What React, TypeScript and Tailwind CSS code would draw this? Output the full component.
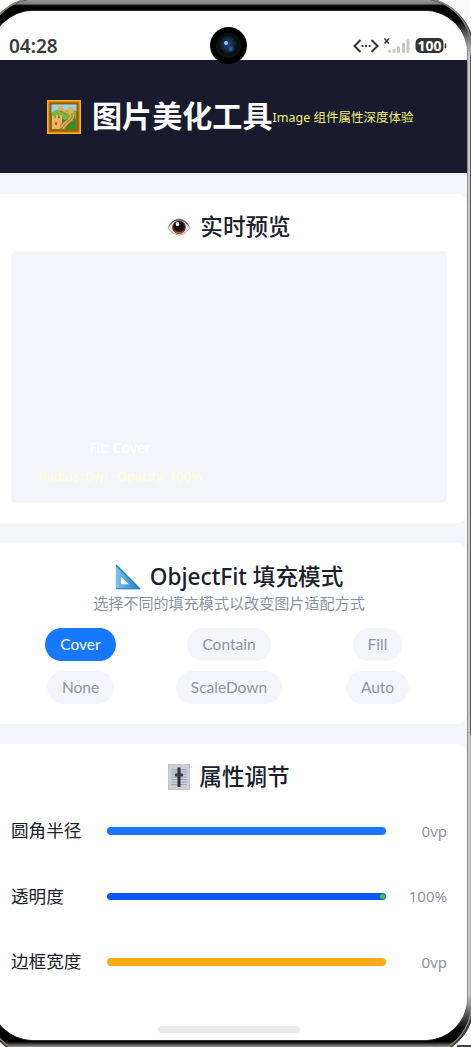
import { useState } from "react";
import type { ReactNode } from "react";

const FIT_MODES = ["Cover", "Contain", "Fill", "None", "ScaleDown", "Auto"];

const SLIDERS = [
  { label: "圆角半径", value: "0vp", track: "bg-[#1677ff]", dot: false },
  { label: "透明度", value: "100%", track: "bg-[#0958f6]", dot: true },
  { label: "边框宽度", value: "0vp", track: "bg-[#faad14]", dot: false },
];

function PictureIcon() {
  return (
    <svg width="34" height="34" viewBox="0 0 34 34" className="shrink-0">
      <rect width="34" height="34" rx="1" fill="#b86a09" />
      <rect x="0.8" y="0.8" width="32.4" height="32.4" fill="none" stroke="#f4b41c" strokeWidth="1.6" />
      <rect x="4" y="4" width="26" height="26" fill="#67a93c" stroke="#8a4707" />
      <path d="M4.500 4.500h25V11l-8-1-7 1-10 2z" fill="#8fd6f2" />
      <path d="M5 12q7-4 13-1 6-2 11 1v9H5z" fill="#7bb640" />
      <path d="M5 29v-9l6-4 7 4 9-4 2 4v9z" fill="#3f8a2c" />
      <path d="M5 18v-2h2v2h2v-3h2v3h2v-3h2v8l-2 3v3H5z" fill="#efb264" />
      <path d="M12 28q4-6 9-9 4-3 1-5l-8-4 1-2 5 3q10 3 6 9-6 4-9 9z" fill="#e8a653" />
      <path d="M11 6h5v4l-2 1-3-1zM21 7h5v6h-5z" fill="#e9ad5c" />
      <path d="M15 28q3-5 8-8 4-4 1-6M13 11l7 4" fill="none" stroke="#b36f27" strokeWidth="1" />
      <path d="M8 25v-2q1-2 2 0v2z" fill="#a35e1c" />
    </svg>
  );
}

function EyeIcon() {
  return (
    <svg width="24" height="20" viewBox="0 0 24 20" className="shrink-0">
      <path d="M.5 11Q5 2 12 1.500 19 2 23.500 11 18 18.500 12 18.500 5 18 .5 11z" fill="#b7aaa8" />
      <path d="M1.500 11Q6 3.500 12 3.200q6 .3 10.500 7.800-5 6.500-10.500 6.500T1.500 11z" fill="#e9e4e7" />
      <circle cx="12" cy="10.300" r="6.800" fill="#70381f" />
      <circle cx="12" cy="9.800" r="5.800" fill="#24130e" />
      <path d="M7.500 13q4.500 4 9 0-1 4-4.500 4t-4.500-4z" fill="#a85b2e" />
      <circle cx="12" cy="9.600" r="4.200" fill="#060506" />
      <circle cx="10.500" cy="7" r="1.900" fill="#fff" />
      <path d="M.7 10.500Q5 2.300 12 1.800q7 .5 11.300 8.700Q18 3.500 12 3.200 6 3.500 .7 10.500z" fill="#675a59" />
    </svg>
  );
}

function RulerIcon() {
  return (
    <svg width="26" height="26" viewBox="0 0 26 26" className="shrink-0">
      <defs>
        <linearGradient id="ruler" x1="0" y1="1" x2="1" y2="1">
          <stop offset="0" stopColor="#7fc4ec" />
          <stop offset="1" stopColor="#1b7cc2" />
        </linearGradient>
      </defs>
      <path d="M.8.5 25 25.200H.8zM6 12.500v7.800h8z" fill="url(#ruler)" fillRule="evenodd" />
      <path d="M1 1l24 24" stroke="#1682c8" strokeWidth="1.500" />
      <path d="M1 24.700h23" stroke="#2688c8" />
    </svg>
  );
}

function MixerIcon() {
  return (
    <svg width="22" height="26" viewBox="0 0 22 26" className="shrink-0">
      <rect x=".3" y=".3" width="21.400" height="25.400" fill="#c9ced9" stroke="#b2b7c2" strokeWidth=".6" />
      <path
        d="M3.500 5.500h15M3.500 8h15M3.500 10.500h15M3.500 13h15M3.500 15.500h15M3.500 18h15M3.500 20.500h15"
        stroke="#9499a3"
        strokeWidth=".8"
      />
      <path d="M9.500 3.500h3v19.500h-3z" fill="#303136" />
      <rect x="7" y="9.500" width="8" height="3" rx="1" fill="#393b40" />
    </svg>
  );
}

function PhoneFrame() {
  return (
    <svg width="471" height="1047" viewBox="0 0 471 1047" className="pointer-events-none absolute inset-0">
      <defs>
        <linearGradient id="shell" gradientUnits="userSpaceOnUse" x1="0" y1="0" x2="0" y2="1047">
          <stop offset="0" stopColor="#999" />
          <stop offset=".0035" stopColor="#808080" />
          <stop offset=".0055" stopColor="#000" />
          <stop offset=".02" stopColor="#080808" />
          <stop offset=".042" stopColor="#999" />
          <stop offset=".055" stopColor="#c8c8c8" />
          <stop offset=".95" stopColor="#c8c8c8" />
          <stop offset=".975" stopColor="#333" />
          <stop offset=".985" stopColor="#000" />
          <stop offset=".995" stopColor="#000" />
          <stop offset="1" stopColor="#999" />
        </linearGradient>
      </defs>
      <rect x="-16" y="-1" width="490" height="1057" rx="53" fill="url(#shell)" />
      <rect x="-15.500" y="-1.500" width="489" height="1058" rx="53" fill="none" stroke="#3c3c3c" strokeWidth="1.500" />
      <rect x="-13.500" y="-2" width="485" height="1057" rx="51" fill="none" stroke="#888478" strokeWidth="1.500" />
      <rect x="-9.500" y="10.500" width="477" height="1030" rx="42.500" fill="none" stroke="#555" strokeOpacity=".5" />
      <path d="M470.500 55v680" stroke="#555" />
      <path d="M457 1046h14" stroke="#444" strokeWidth="2" />
    </svg>
  );
}

function StatusBar() {
  return (
    <div className="flex h-[49px] shrink-0 items-end justify-between bg-white pr-5 pl-[18px]">
      <span className="mb-[2px] font-['Noto_Sans'] text-[19px] leading-6 font-semibold text-[#3b3b3b]">04:28</span>
      <svg width="95" height="20" viewBox="0 0 95 20" className="mb-[4px]">
        <path d="M8.500 4 2.500 10 8.500 16M19.500 4l6 6-6 6" fill="none" stroke="#333" strokeWidth="2" />
        <path d="M9.500 10h1.800M13.100 10h1.800M16.700 10h1.800" stroke="#333" strokeWidth="1.800" />
        <path d="M32.500 2.500l4.500 5M37 2.500l-4.500 5" stroke="#333" strokeWidth="1.500" />
        <path d="M37.500 15v.5M42 14v1.500M46.500 11.500v4M51.500 8v7.500M56 4.500v11" stroke="#c7c7c7" strokeWidth="3" strokeLinecap="round" />
        <rect x="63.500" y="2" width="28" height="15" rx="5" fill="#333" />
        <path d="M93.500 8v3.500" stroke="#333" strokeWidth="1.500" strokeLinecap="round" />
        <text x="77.500" y="14.600" textAnchor="middle" fontFamily="Noto Sans" fontSize="14" fontWeight="700" fill="#fff">
          100
        </text>
      </svg>
    </div>
  );
}

function Camera() {
  return (
    <div className="absolute top-[27px] left-[210px] flex size-[37px] items-center justify-center rounded-full bg-black">
      <div className="size-[25px] rounded-full bg-[radial-gradient(circle_at_48%_45%,#1d4d80_0%,#13283f_32%,#0b0d10_50%,#121212_68%,#060606_100%)]">
        <div className="mt-[8px] ml-[8px] size-[4px] rounded-full bg-[#8cc8f5] blur-[0.6px]" />
        <div className="mt-[2px] ml-[13px] size-[4px] rounded-full bg-[#3975bd] blur-[0.8px]" />
      </div>
    </div>
  );
}

function CardTitle({ icon, children }: { icon: ReactNode; children: ReactNode }) {
  return (
    <h2 className="flex h-[30px] items-center justify-center gap-[9px] text-[22.600px] leading-[30px] font-medium text-[#1a202c]">
      {icon}
      <span className="pb-px">{children}</span>
    </h2>
  );
}

export default function App() {
  const [fit, setFit] = useState("Cover");

  return (
    <div className="relative h-[1047px] w-[471px] overflow-hidden bg-[#fafafa] font-['Noto_Sans','Noto_Sans_CJK_SC',sans-serif]">
      <PhoneFrame />
      <div className="relative mt-[11px] -ml-[9px] flex h-[1029px] w-[476px] flex-col overflow-hidden rounded-[42px] bg-[#f4f5fa]">
        <StatusBar />
        <header className="flex h-[113px] shrink-0 items-center bg-[#1a1a2e] pl-14">
          <PictureIcon />
          <h1 className="ml-[11px] pb-[2px] text-[30.100px] leading-10 font-bold whitespace-nowrap text-white">
            图片美化工具
          </h1>
          <span className="mt-[2px] text-[12.500px] leading-5 whitespace-nowrap text-[#f1f176]">
            Image 组件属性深度体验
          </span>
        </header>

        <section className="mt-[21px] h-[329px] shrink-0 rounded-[10px] bg-white px-5 pt-[18px]">
          <CardTitle icon={<EyeIcon />}>实时预览</CardTitle>
          <div className="mt-[9px] flex h-[252px] items-end rounded-[5px] bg-[#f4f5fa] pb-[13px] pl-[27px]">
            <div className="flex w-[164px] flex-col items-center whitespace-nowrap">
              <span className="text-[14px] leading-7 text-white">Fit: {fit}</span>
              <span className="text-[12.700px] leading-7 text-[#ffffd2]">Radius: 0vp · Opacity: 100%</span>
            </div>
          </div>
        </section>

        <section className="mt-5 h-[181px] shrink-0 rounded-[10px] bg-white px-5 pt-[19px]">
          <CardTitle icon={<RulerIcon />}>ObjectFit 填充模式</CardTitle>
          <p className="mt-px text-center text-[15.100px] leading-5 text-[#8a94a3]">选择不同的填充模式以改变图片适配方式</p>
          <div className="mt-[15px] grid grid-cols-3 justify-items-center gap-x-[9.500px] gap-y-[10px]">
            {FIT_MODES.map((mode) => (
              <button
                key={mode}
                onClick={() => setFit(mode)}
                className={`h-[33px] rounded-full px-[15px] pb-[2px] font-['Lato'] text-[15.500px] leading-5 ${
                  fit === mode ? "bg-[#1677ff] text-white" : "bg-[#f4f5fa] text-[#8a94a3]"
                }`}
              >
                {mode}
              </button>
            ))}
          </div>
        </section>

        <section className="mt-5 grow rounded-t-[10px] bg-white px-5 pt-[18px]">
          <CardTitle icon={<MixerIcon />}>属性调节</CardTitle>
          <div className="mt-[6px]">
            {SLIDERS.map(({ label, value, track, dot }) => (
              <div key={label} className="flex h-[65.600px] items-center">
                <span className="w-24 pb-px text-[17.600px] leading-6 text-[#1a202c]">{label}</span>
                <div className={`flex h-[7.500px] w-[279px] items-center justify-end rounded-full pr-px ${track}`}>
                  {dot && <div className="size-[5px] rounded-full bg-[#52c41a]" />}
                </div>
                <span className="grow text-right text-[15px] leading-5 text-[#8a94a3]">{value}</span>
              </div>
            ))}
          </div>
        </section>
        <div className="absolute bottom-[7px] left-[167px] h-[7px] w-[142px] rounded-full bg-[#e9e9e9]" />
      </div>
      <Camera />
    </div>
  );
}
